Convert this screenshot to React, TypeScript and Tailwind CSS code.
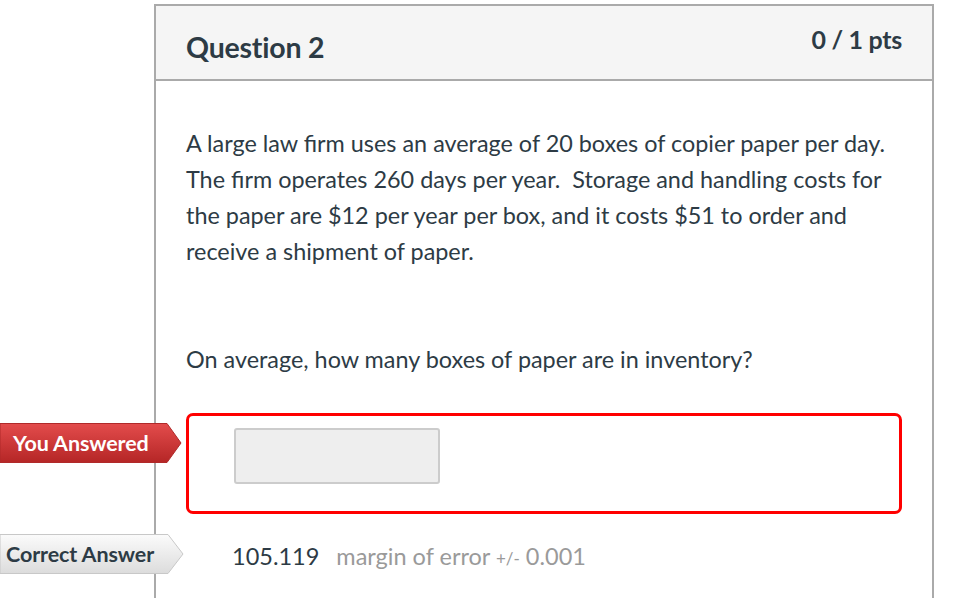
import React from 'react';

const Flag = ({ red, label, className }: { red: boolean; label: string; className: string }) => {
  const id = red ? 'g-red' : 'g-gray';
  return (
    <div className={`absolute left-0 h-[40px] w-[184px] ${className}`}>
      <svg className="absolute inset-0" width="184" height="40" viewBox="0 0 184 40">
        <defs>
          <linearGradient id={id} x1="0" y1="0" x2="0" y2="1">
            <stop offset="0" stopColor={red ? '#e34c4c' : '#fbfbfb'} />
            <stop offset="1" stopColor={red ? '#b52626' : '#dcdcdc'} />
          </linearGradient>
        </defs>
        <polygon
          points={red ? '0,0.5 167,0.5 181,20 167,39.5 0,39.5' : '0,0.5 168,0.5 183,20 168,39.5 0,39.5'}
          fill={`url(#${id})`}
          stroke={red ? '#b02a2a' : '#c8c8c8'}
          strokeWidth="1"
        />
      </svg>
      <span
        className={`relative flex h-full items-center text-[21.5px] font-bold tracking-[-0.1px] ${
          red ? 'pl-[13px] text-white' : 'pl-[6px] text-[#2d3b45]'
        }`}
      >
        {label}
      </span>
    </div>
  );
};

export default function App() {
  return (
    <div className="relative min-h-screen overflow-hidden bg-white pt-[4px] pl-[154px] font-['Lato',sans-serif] text-[#2d3b45]">
      <div className="h-[620px] w-[780px] border-x-2 border-t-2 border-[#aaaaaa]">
        <div className="flex h-[75px] justify-between border-b-2 border-[#aaaaaa] bg-[#f5f5f5] px-[30px]">
          <h2 className="pt-[20px] text-[28.5px] font-bold tracking-[-0.2px]">Question 2</h2>
          <span className="pt-[15px] text-[25px] font-bold tracking-[-0.3px]">0 / 1 pts</span>
        </div>
        <div className="px-[30px] pt-[44px] text-[23.4px] leading-[36px]">
          <p>
            A large law firm uses an average of 20 boxes of copier paper per day. The firm operates 260 days per
            year.&nbsp; Storage and handling costs for the paper are $12 per year per box, and it costs $51 to order and
            receive a shipment of paper.
          </p>
          <p className="mt-[72px]">On average, how many boxes of paper are in inventory?</p>
          <div className="mt-[36px] h-[101px] rounded-[7px] border-[3px] border-[#ff0000] pl-[45px] pt-[12px]">
            <div className="h-[56px] w-[206px] rounded-[3px] border-2 border-[#cccccc] bg-[#eeeeee]" />
          </div>
          <div className="flex items-baseline pt-[24px] pl-[46px]">
            <span className="text-[23.5px]">105.119</span>
            <span className="ml-[17px] text-[23.5px] text-[#9a9a9a]">
              margin of error <span className="text-[17px]">+/-</span> 0.001
            </span>
          </div>
        </div>
      </div>
      <Flag red label="You Answered" className="top-[423px]" />
      <Flag red={false} label="Correct Answer" className="top-[534px]" />
    </div>
  );
}
